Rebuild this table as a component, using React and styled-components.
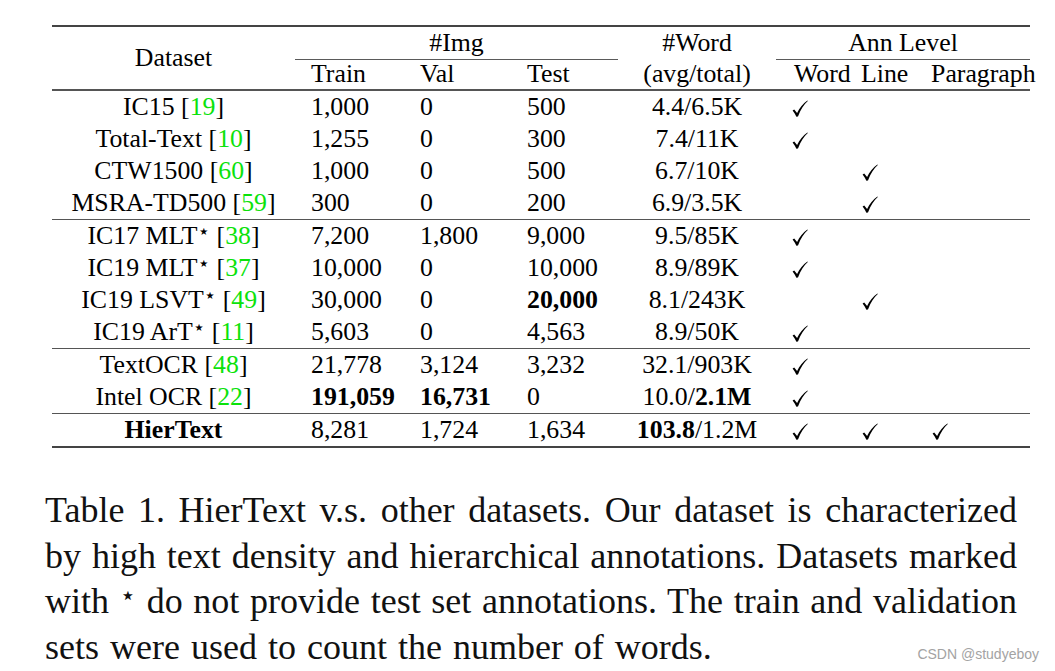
import React from "react";
import styled, { createGlobalStyle } from "styled-components";

const GlobalStyle = createGlobalStyle`
  html, body { margin: 0; padding: 0; background: #fff; }
  body { font-family: "Liberation Serif", "DejaVu Serif", serif; color: #000; }
`;

const Page = styled.div`
  position: relative;
  width: 1055px;
  height: 671px;
  overflow: hidden;
  padding-top: 25px;
  box-sizing: border-box;
`;

const Table = styled.table`
  margin-left: 52px;
  width: 978px;
  border-collapse: collapse;
  table-layout: fixed;
  font-size: 25.8px;
  font-family: "Liberation Serif", "DejaVu Serif", serif;
`;

const Head = styled.thead`
  border-top: 2px solid #444;
`;

const HeadRow = styled.tr`
  height: ${(p) => p.$h}px;
`;

const Th = styled.th`
  font-weight: normal;
  padding: 0 0 0 ${(p) => p.$pl || 0}px;
  line-height: 28px;
  white-space: nowrap;
  text-align: ${(p) => p.$align || "left"};
  vertical-align: middle;
  border-bottom: ${(p) => (p.$rule ? "1.5px solid #5a5a5a" : "none")};
`;

const Group = styled.tbody`
  border-top: ${(p) => (p.$thick ? 2 : 1.5)}px solid #555;
  border-bottom: ${(p) => (p.$last ? "2px solid #444" : "none")};
`;

const Row = styled.tr`
  height: 32px;
`;

const Td = styled.td`
  padding: 0 0 0 ${(p) => p.$pl || 0}px;
  line-height: 32px;
  white-space: nowrap;
  text-align: ${(p) => p.$align || "left"};
  font-weight: ${(p) => (p.$bold ? "bold" : "normal")};
`;

const Ref = styled.span`
  color: #0be20b;
`;

const Star = styled.sup`
  font-family: "Liberation Serif", "DejaVu Sans", sans-serif;
  font-size: ${(p) => p.$size || 20}px;
  vertical-align: ${(p) => p.$raise || 6}px;
  line-height: 0;
  margin-left: ${(p) => p.$ml ?? 0}px;
`;

const B = styled.b`
  font-weight: bold;
`;

const CheckSvg = styled.svg`
  width: 16px;
  height: 17px;
  vertical-align: -2px;
`;

const Check = () => (
  <CheckSvg viewBox="0 0 16 17">
    <path
      d="M0.6 10.6 L2.2 9.5 L5.1 13.1 C7.6 7.8 11 3.2 15.4 0.4 L15.8 1.1 C11.7 4.6 8.7 9.6 6 16.4 L4.4 16.8 C3.4 14.6 2.1 12.6 0.6 10.6 Z"
      fill="#000"
    />
  </CheckSvg>
);

const Caption = styled.div`
  margin: 40px 0 0 45px;
  width: 972px;
  font-size: 36px;
  line-height: 45.5px;
  font-family: "Liberation Serif", "DejaVu Serif", serif;
  color: #111;
`;

const Line = styled.span`
  display: block;
  white-space: nowrap;
  text-align: left;
  text-align-last: ${(p) => (p.$justify ? "justify" : "left")};
  word-spacing: ${(p) => (p.$justify ? 0 : 2)}px;
`;

const Watermark = styled.div`
  position: absolute;
  right: 16px;
  top: 645px;
  font-family: "Liberation Sans", Arial, sans-serif;
  font-size: 14px;
  line-height: 18px;
  color: #a3a3a3;
`;

const groups = [
  [
    { name: <>IC15 [<Ref>19</Ref>]</>, tr: "1,000", va: "0", te: "500", w: "4.4/6.5K", c: [1, 0, 0] },
    { name: <>Total-Text [<Ref>10</Ref>]</>, tr: "1,255", va: "0", te: "300", w: "7.4/11K", c: [1, 0, 0] },
    { name: <>CTW1500 [<Ref>60</Ref>]</>, tr: "1,000", va: "0", te: "500", w: "6.7/10K", c: [0, 1, 0] },
    { name: <>MSRA-TD500 [<Ref>59</Ref>]</>, tr: "300", va: "0", te: "200", w: "6.9/3.5K", c: [0, 1, 0] },
  ],
  [
    { name: <>IC17 MLT<Star>⋆</Star> [<Ref>38</Ref>]</>, tr: "7,200", va: "1,800", te: "9,000", w: "9.5/85K", c: [1, 0, 0] },
    { name: <>IC19 MLT<Star>⋆</Star> [<Ref>37</Ref>]</>, tr: "10,000", va: "0", te: "10,000", w: "8.9/89K", c: [1, 0, 0] },
    { name: <>IC19 LSVT<Star>⋆</Star> [<Ref>49</Ref>]</>, tr: "30,000", va: "0", te: "20,000", teB: true, w: "8.1/243K", c: [0, 1, 0] },
    { name: <>IC19 ArT<Star>⋆</Star> [<Ref>11</Ref>]</>, tr: "5,603", va: "0", te: "4,563", w: "8.9/50K", c: [1, 0, 0] },
  ],
  [
    { name: <>TextOCR [<Ref>48</Ref>]</>, tr: "21,778", va: "3,124", te: "3,232", w: "32.1/903K", c: [1, 0, 0] },
    { name: <>Intel OCR [<Ref>22</Ref>]</>, tr: "191,059", trB: true, va: "16,731", vaB: true, te: "0", w: <>10.0/<B>2.1M</B></>, c: [1, 0, 0] },
  ],
  [
    { name: "HierText", nameB: true, tr: "8,281", va: "1,724", te: "1,634", w: <><B>103.8</B>/1.2M</>, c: [1, 1, 1] },
  ],
];

export default function App() {
  return (
    <>
      <GlobalStyle />
      <Page>
        <Table>
          <colgroup>
            <col style={{ width: 243 }} />
            <col style={{ width: 109 }} />
            <col style={{ width: 107 }} />
            <col style={{ width: 107 }} />
            <col style={{ width: 158 }} />
            <col style={{ width: 70 }} />
            <col style={{ width: 70 }} />
            <col style={{ width: 114 }} />
          </colgroup>
          <Head>
            <HeadRow $h={33}>
              <Th rowSpan={2} $align="center">Dataset</Th>
              <Th colSpan={3} $align="center" $rule>#Img</Th>
              <Th $align="center">#Word</Th>
              <Th colSpan={3} $align="center" $rule>Ann Level</Th>
            </HeadRow>
            <HeadRow $h={31}>
              <Th $pl={16}>Train</Th>
              <Th $pl={16}>Val</Th>
              <Th $pl={16}>Test</Th>
              <Th $align="center">(avg/total)</Th>
              <Th $pl={18}>Word</Th>
              <Th $pl={15}>Line</Th>
              <Th $pl={15}>Paragraph</Th>
            </HeadRow>
          </Head>
          {groups.map((g, gi) => (
            <Group key={gi} $thick={gi === 0} $last={gi === groups.length - 1}>
              {g.map((r, ri) => (
                <Row key={ri}>
                  <Td $align="center" $bold={r.nameB}>{r.name}</Td>
                  <Td $pl={16} $bold={r.trB}>{r.tr}</Td>
                  <Td $pl={16} $bold={r.vaB}>{r.va}</Td>
                  <Td $pl={16} $bold={r.teB}>{r.te}</Td>
                  <Td $align="center">{r.w}</Td>
                  <Td $pl={16}>{r.c[0] ? <Check /> : null}</Td>
                  <Td $pl={16}>{r.c[1] ? <Check /> : null}</Td>
                  <Td $pl={16}>{r.c[2] ? <Check /> : null}</Td>
                </Row>
              ))}
            </Group>
          ))}
        </Table>
        <Caption>
          <Line $justify>Table 1. HierText v.s. other datasets. Our dataset is characterized</Line>
          <Line $justify>by high text density and hierarchical annotations. Datasets marked</Line>
          <Line $justify>
            with <Star $size={26} $raise={9}>⋆</Star> do not provide test set annotations. The train and validation
          </Line>
          <Line>sets were used to count the number of words.</Line>
        </Caption>
        <Watermark>CSDN @studyeboy</Watermark>
      </Page>
    </>
  );
}
